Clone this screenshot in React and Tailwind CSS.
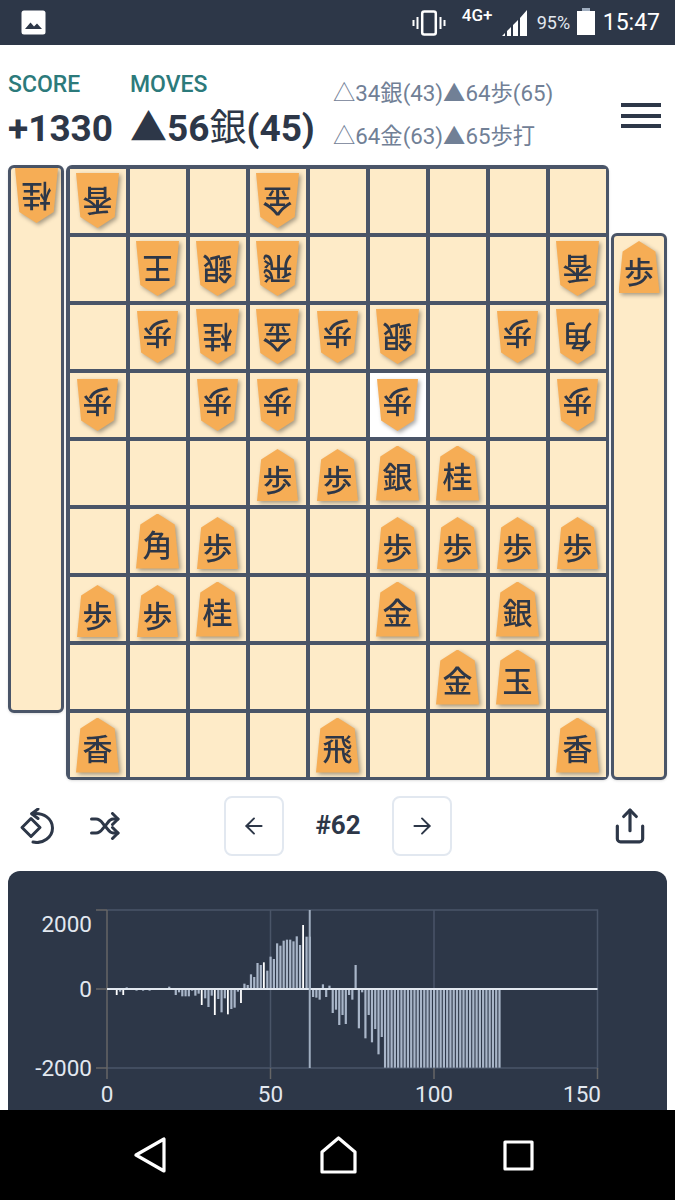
import { ArrowLeft, ArrowRight, Share } from 'lucide-react';

const CJK = "font-['Roboto','Noto_Sans_CJK_JP',sans-serif]";

// r = gote piece (drawn upside down)
const BOARD = [
  ['r香', '', '', 'r金', '', '', '', '', ''],
  ['', 'r王', 'r銀', 'r飛', '', '', '', '', 'r香'],
  ['', 'r歩', 'r桂', 'r金', 'r歩', 'r銀', '', 'r歩', 'r角'],
  ['r歩', '', 'r歩', 'r歩', '', 'r歩', '', '', 'r歩'],
  ['', '', '', '歩', '歩', '銀', '桂', '', ''],
  ['', '角', '歩', '', '', '歩', '歩', '歩', '歩'],
  ['歩', '歩', '桂', '', '', '金', '', '銀', ''],
  ['', '', '', '', '', '', '金', '玉', ''],
  ['香', '', '', '', '飛', '', '', '', '香'],
];

const LAST_MOVE = '3-5';

// eval per move, in chart pixels x3 from the zero line
const SCORES = [
  0, 2, 2, -18, -8, -18, 5, -3, -2, -5, -3, -5, 2, -5, 3, -3, 3, -2, -2, 7, -2,
  -18, -10, -22, -22, -22, -5, -20, -14, -48, -28, -54, -20, -78, -30, -70, -28, -76, -60, -56, -8, -42,
  16, 12, 44, 36, 78, 72, 80, 55, 97, 90, 137, 130, 145, 148, 148, 143, 158, 132, 192, 157, 157,
  -24, -26, -32, 14, -24, 10, -72, -62, -108, -78, -105, -18, -32, 72, -118, -10, -148, -78, -160, -120, -196, -144,
  ...Array(36).fill(-236),
];
const BRIGHT = [3, 5, 29, 33, 37, 41, 48, 60];

function Piece({ name }) {
  const flipped = name.startsWith('r');
  const kanji = flipped ? name.slice(1) : name;
  const small = kanji === '歩';
  let size = 'h-[55px] w-[43px] pb-[11px]';
  if (small) size = flipped ? 'h-[52px] w-[41px] pb-[10px]' : 'h-[52px] w-[41px] pb-[8px]';
  else if (flipped) size = 'h-[55px] w-[43px] pb-[15px]';
  return (
    <div className={`drop-shadow-[2px_2px_2px_rgba(0,0,0,0.35)] ${small && !flipped ? 'mt-[5px]' : ''} ${!small && !flipped ? 'mt-[1px]' : ''}`}>
      <div
        className={`flex items-end justify-center bg-[#f6ad55] text-[30px] font-medium leading-none text-[#2d3748] font-['Noto_Sans_CJK_JP',sans-serif] [clip-path:polygon(50%_0,90%_20%,100%_100%,0_100%,10%_20%)] ${size} ${flipped ? 'rotate-180' : ''}`}
      >
        {kanji}
      </div>
    </div>
  );
}

function Komadai({ name, className }) {
  return (
    <div className={`flex w-[56px] justify-center rounded-md border-[3.5px] border-[#4a5568] bg-[#feebc8] shadow-sm ${className}`}>
      <div className="h-[56px]">
        <Piece name={name} />
      </div>
    </div>
  );
}

function Board() {
  return (
    <div className="grid grid-cols-[repeat(9,56px)] auto-rows-[64px] gap-[4px] rounded-md bg-[#4a5568] p-[3.5px] shadow-sm">
      {BOARD.map((row, y) =>
        row.map((cell, x) => (
          <div
            key={`${y}-${x}`}
            className={`flex items-center justify-center ${`${y}-${x}` === LAST_MOVE ? 'bg-white' : 'bg-[#feebc8]'}`}
          >
            {cell && <Piece name={cell} />}
          </div>
        )),
      )}
    </div>
  );
}

function StatusBar() {
  return (
    <div className="flex h-[45px] shrink-0 items-center bg-[#2d3748] pl-[21px] pr-[15px] text-white font-['Roboto',sans-serif]">
      <svg width="25" height="25" viewBox="0 0 25 25">
        <rect x="0.5" y="0.5" width="24" height="24" rx="2.5" fill="#fff" />
        <path d="M4 19 9.5 12.5 13 16.5 16 13.5 21 19Z" fill="#2d3748" />
      </svg>
      <div className="ml-auto flex items-center">
        <svg width="34" height="26" viewBox="0 0 34 26" fill="none" stroke="#fff" strokeWidth="2">
          <rect x="10.200" y="1.500" width="13.600" height="23" rx="2" strokeWidth="2.500" />
          <path d="M5.500 7v12M1.500 10v6M28.500 7v12M32.500 10v6" />
        </svg>
        <span className="mb-[15px] ml-[16px] w-[30px] text-[17px] font-medium leading-none">4G+</span>
        <svg className="ml-[10px] mt-[1px]" width="25" height="27" viewBox="0 0 25 27" fill="#fff">
          <path d="M0 26 3 23V26ZM5 21 9 17V26H5ZM11 15 16 10V26H11ZM18 8 25 0V26H18Z" />
        </svg>
        <span className="ml-[10px] w-[33px] text-[18px] leading-none text-[#e2e8f0]">95%</span>
        <svg className="ml-[7px] mb-[2px]" width="18" height="27" viewBox="0 0 18 27" fill="#fff">
          <rect x="5" y="0" width="8" height="3" fill="#a0aec0" />
          <rect x="0" y="3" width="18" height="24" />
        </svg>
        <span className="ml-[8px] text-[23px] leading-none">15:47</span>
      </div>
    </div>
  );
}

function Header() {
  return (
    <div className={`flex h-[120px] shrink-0 pl-[8px] pr-[14px] pt-[27px] ${CJK}`}>
      <div className="w-[122px]">
        <div className="text-[23px] font-medium leading-[26px] text-[#2c7a7b]">SCORE</div>
        <div className="mt-[9px] text-[37px] font-bold leading-[44px] text-[#2d3748]">+1330</div>
      </div>
      <div className="w-[203px]">
        <div className="text-[23px] font-medium leading-[26px] text-[#2c7a7b]">MOVES</div>
        <div className="mt-[9px] whitespace-nowrap text-[37px] font-bold leading-[44px] text-[#2d3748]">
          ▲56<span className="font-normal">銀</span>(45)
        </div>
      </div>
      <div className="text-[22.3px] leading-[43px] text-[#718096]">
        <div className="whitespace-nowrap">△34銀(43)▲64歩(65)</div>
        <div className="whitespace-nowrap">△64金(63)▲65歩打</div>
      </div>
      <div className="ml-auto mt-[31px] flex h-[25px] w-[40px] flex-col justify-between">
        <div className="h-[4px] bg-[#2d3748]" />
        <div className="h-[4px] bg-[#2d3748]" />
        <div className="h-[4px] bg-[#2d3748]" />
      </div>
    </div>
  );
}

function Controls() {
  return (
    <div className="flex h-[91px] shrink-0 items-center text-[#2d3748]">
      <svg className="ml-[19px]" width="36" height="36" viewBox="0 0 36 36" fill="none" stroke="currentColor" strokeWidth="3" strokeLinejoin="round" strokeLinecap="round">
        <path d="M3 19.500 12 10.500 21 19.500 12 28.500Z" />
        <path d="M19 1 12.700 5.700 19 10.500" />
        <path d="M13 5.700C25 4 33.500 11 33.500 20 33.500 29 24 36.500 14 34" />
      </svg>
      <svg className="ml-[35px]" width="30" height="28" viewBox="0 0 30 28" fill="none" stroke="currentColor" strokeWidth="3" strokeLinejoin="round" strokeLinecap="round">
        <path d="M1.500 7H6C11 7 12 11 15 14S19 21 23 21H28" />
        <path d="M1.500 21H6C11 21 12 17 15 14S19 7 23 7H28" />
        <path d="M22.500 1.500 28 7 22.500 12.500M22.500 15.500 28 21 22.500 26.500" />
      </svg>
      <div className="ml-[104px] flex h-[60px] w-[60px] items-center justify-center rounded-lg border-2 border-[#e2e8f0]">
        <ArrowLeft size={26} strokeWidth={1.8} />
      </div>
      <div className="w-[108px] text-center text-[26px] font-bold font-['Roboto',sans-serif]">#62</div>
      <div className="flex h-[60px] w-[60px] items-center justify-center rounded-lg border-2 border-[#e2e8f0]">
        <ArrowRight size={26} strokeWidth={1.8} />
      </div>
      <Share className="ml-[159px]" size={38} strokeWidth={2} />
    </div>
  );
}

function Chart() {
  const px = (v) => 99 + v * 3.27;
  const top = 39;
  const zero = 118;
  const bottom = 197;
  const grid = '#4a5568';
  const axis = '#666666';
  const label = 'fill-[#e2e8f0] text-[22.5px] font-[\'Roboto\',sans-serif]';
  return (
    <svg width="659" height="239" viewBox="0 0 659 239">
      <path d={`M${px(0)} ${top}H${px(150)}V${bottom}H${px(0)}M${px(50)} ${top}V${bottom}M${px(100)} ${top}V${bottom}`} fill="none" stroke={grid} strokeWidth="1.500" />
      <path d={`M${px(0)} ${top}V${bottom + 11}M${px(0) - 11} ${top}H${px(0)}M${px(0) - 11} ${zero}H${px(0)}M${px(0) - 11} ${bottom}H${px(0)}M${px(50)} ${bottom}V${bottom + 11}M${px(100)} ${bottom}V${bottom + 11}M${px(150)} ${bottom}V${bottom + 11}`} fill="none" stroke={axis} strokeWidth="1.500" />
      {SCORES.map((s, i) => {
        const h = s / 3;
        return (
          <rect
            key={i}
            x={px(i) - 1}
            y={h > 0 ? zero - h : zero}
            width={BRIGHT.includes(i) ? 1.8 : 2.2}
            height={Math.abs(h)}
            fill={BRIGHT.includes(i) ? '#ffffff' : '#a9b6c9'}
          />
        );
      })}
      <path d={`M${px(0)} ${zero}H${px(150)}`} stroke="#e2e8f0" strokeWidth="2" />
      <path d={`M${px(62)} ${top}V${bottom}`} stroke="#a0aec0" strokeWidth="2" />
      <text x="84" y={top + 22} textAnchor="end" className={label}>2000</text>
      <text x="84" y={zero + 8} textAnchor="end" className={label}>0</text>
      <text x="84" y={bottom + 8} textAnchor="end" className={label}>-2000</text>
      {[0, 50, 100].map((v) => (
        <text key={v} x={px(v)} y={bottom + 34} textAnchor="middle" className={label}>{v}</text>
      ))}
      <text x="593" y={bottom + 34} textAnchor="end" className={label}>150</text>
    </svg>
  );
}

function NavBar() {
  return (
    <div className="flex h-[90px] shrink-0 items-center bg-black pl-[134px]">
      <svg width="32" height="36" viewBox="0 0 32 36" fill="none" stroke="#fff" strokeWidth="3.200" strokeLinejoin="round">
        <path d="M30 2V34L2 18Z" />
      </svg>
      <svg className="ml-[154px]" width="37" height="38" viewBox="0 0 37 38" fill="none" stroke="#fff" strokeWidth="3.200" strokeLinejoin="round">
        <path d="M18.500 2 35 16V36H2V16Z" />
      </svg>
      <svg className="ml-[146px]" width="31" height="31" viewBox="0 0 31 31" fill="none" stroke="#fff" strokeWidth="3.200" strokeLinejoin="round">
        <rect x="2" y="2" width="27" height="27" />
      </svg>
    </div>
  );
}

export default function App() {
  return (
    <div className="flex h-[1200px] w-[675px] flex-col overflow-hidden bg-white">
      <StatusBar />
      <Header />
      <div className="flex h-[615px] shrink-0 gap-[2px] pl-[8px]">
        <Komadai name="r桂" className="h-[548px]" />
        <Board />
        <Komadai name="歩" className="h-[547px] self-end" />
      </div>
      <Controls />
      <div className="mx-[8px] min-h-0 flex-1 overflow-hidden rounded-t-xl bg-[#2d3748]">
        <Chart />
      </div>
      <NavBar />
    </div>
  );
}
